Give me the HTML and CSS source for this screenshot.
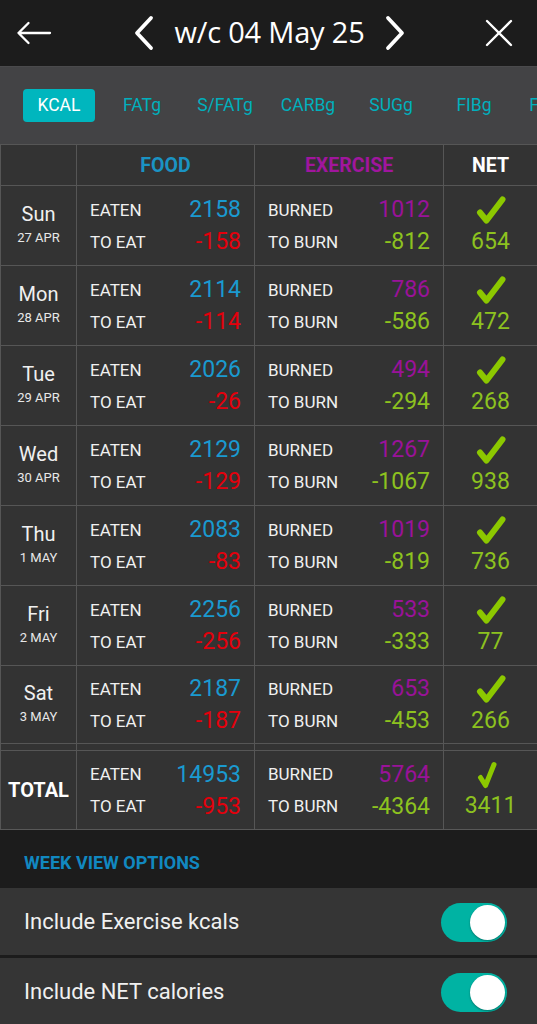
FILE: index.html
```html
<!DOCTYPE html>
<html>
<head>
<meta charset="utf-8">
<link rel="stylesheet" href="styles.css">
</head>
<body>
<div class="app">
  <header class="topbar">
    <svg class="ico-back" width="36" height="26" viewBox="0 0 36 26"><path d="M34 13 H2.5 M12.5 3 L2.5 13 L12.5 23" fill="none" stroke="#fff" stroke-width="2.3" stroke-linecap="round" stroke-linejoin="round"/></svg>
    <div class="week">
      <svg class="chev" width="22" height="36" viewBox="0 0 22 36"><path d="M18 3 L4 18 L18 33" fill="none" stroke="#fff" stroke-width="3.8" stroke-linecap="round" stroke-linejoin="round"/></svg>
      <span class="title">w/c 04 May 25</span>
      <svg class="chev" width="22" height="36" viewBox="0 0 22 36"><path d="M4 3 L18 18 L4 33" fill="none" stroke="#fff" stroke-width="3.8" stroke-linecap="round" stroke-linejoin="round"/></svg>
    </div>
    <svg class="ico-close" width="28" height="28" viewBox="0 0 28 28"><path d="M2 2 L26 26 M26 2 L2 26" fill="none" stroke="#fff" stroke-width="2.3" stroke-linecap="round"/></svg>
  </header>

  <nav class="tabs">
    <span class="tab active">KCAL</span>
    <span class="tab">FATg</span>
    <span class="tab">S/FATg</span>
    <span class="tab">CARBg</span>
    <span class="tab">SUGg</span>
    <span class="tab">FIBg</span>
    <span class="tab">FRUITg</span>
  </nav>

  <div class="grid">
    <div class="cell head"></div>
    <div class="cell head food">FOOD</div>
    <div class="cell head exer">EXERCISE</div>
    <div class="cell head netc">NET</div>

    <div class="cell day"><span class="dname">Sun</span><span class="ddate">27 APR</span></div>
    <div class="cell pair"><div class="line"><span class="lbl">EATEN</span><span class="num blue">2158</span></div><div class="line"><span class="lbl">TO EAT</span><span class="num red">-158</span></div></div>
    <div class="cell pair"><div class="line"><span class="lbl">BURNED</span><span class="num purple">1012</span></div><div class="line"><span class="lbl">TO BURN</span><span class="num green">-812</span></div></div>
    <div class="cell net"><svg class="check" width="32" height="32" viewBox="0 0 32 32"><path d="M5 17.5 L11.5 25.5 L27.5 4.5" fill="none" stroke="#8cc800" stroke-width="6" stroke-linecap="round" stroke-linejoin="round"/></svg><span class="num green">654</span></div>

    <div class="cell day"><span class="dname">Mon</span><span class="ddate">28 APR</span></div>
    <div class="cell pair"><div class="line"><span class="lbl">EATEN</span><span class="num blue">2114</span></div><div class="line"><span class="lbl">TO EAT</span><span class="num red">-114</span></div></div>
    <div class="cell pair"><div class="line"><span class="lbl">BURNED</span><span class="num purple">786</span></div><div class="line"><span class="lbl">TO BURN</span><span class="num green">-586</span></div></div>
    <div class="cell net"><svg class="check" width="32" height="32" viewBox="0 0 32 32"><path d="M5 17.5 L11.5 25.5 L27.5 4.5" fill="none" stroke="#8cc800" stroke-width="6" stroke-linecap="round" stroke-linejoin="round"/></svg><span class="num green">472</span></div>

    <div class="cell day"><span class="dname">Tue</span><span class="ddate">29 APR</span></div>
    <div class="cell pair"><div class="line"><span class="lbl">EATEN</span><span class="num blue">2026</span></div><div class="line"><span class="lbl">TO EAT</span><span class="num red">-26</span></div></div>
    <div class="cell pair"><div class="line"><span class="lbl">BURNED</span><span class="num purple">494</span></div><div class="line"><span class="lbl">TO BURN</span><span class="num green">-294</span></div></div>
    <div class="cell net"><svg class="check" width="32" height="32" viewBox="0 0 32 32"><path d="M5 17.5 L11.5 25.5 L27.5 4.5" fill="none" stroke="#8cc800" stroke-width="6" stroke-linecap="round" stroke-linejoin="round"/></svg><span class="num green">268</span></div>

    <div class="cell day"><span class="dname">Wed</span><span class="ddate">30 APR</span></div>
    <div class="cell pair"><div class="line"><span class="lbl">EATEN</span><span class="num blue">2129</span></div><div class="line"><span class="lbl">TO EAT</span><span class="num red">-129</span></div></div>
    <div class="cell pair"><div class="line"><span class="lbl">BURNED</span><span class="num purple">1267</span></div><div class="line"><span class="lbl">TO BURN</span><span class="num green">-1067</span></div></div>
    <div class="cell net"><svg class="check" width="32" height="32" viewBox="0 0 32 32"><path d="M5 17.5 L11.5 25.5 L27.5 4.5" fill="none" stroke="#8cc800" stroke-width="6" stroke-linecap="round" stroke-linejoin="round"/></svg><span class="num green">938</span></div>

    <div class="cell day"><span class="dname">Thu</span><span class="ddate">1 MAY</span></div>
    <div class="cell pair"><div class="line"><span class="lbl">EATEN</span><span class="num blue">2083</span></div><div class="line"><span class="lbl">TO EAT</span><span class="num red">-83</span></div></div>
    <div class="cell pair"><div class="line"><span class="lbl">BURNED</span><span class="num purple">1019</span></div><div class="line"><span class="lbl">TO BURN</span><span class="num green">-819</span></div></div>
    <div class="cell net"><svg class="check" width="32" height="32" viewBox="0 0 32 32"><path d="M5 17.5 L11.5 25.5 L27.5 4.5" fill="none" stroke="#8cc800" stroke-width="6" stroke-linecap="round" stroke-linejoin="round"/></svg><span class="num green">736</span></div>

    <div class="cell day"><span class="dname">Fri</span><span class="ddate">2 MAY</span></div>
    <div class="cell pair"><div class="line"><span class="lbl">EATEN</span><span class="num blue">2256</span></div><div class="line"><span class="lbl">TO EAT</span><span class="num red">-256</span></div></div>
    <div class="cell pair"><div class="line"><span class="lbl">BURNED</span><span class="num purple">533</span></div><div class="line"><span class="lbl">TO BURN</span><span class="num green">-333</span></div></div>
    <div class="cell net"><svg class="check" width="32" height="32" viewBox="0 0 32 32"><path d="M5 17.5 L11.5 25.5 L27.5 4.5" fill="none" stroke="#8cc800" stroke-width="6" stroke-linecap="round" stroke-linejoin="round"/></svg><span class="num green">77</span></div>

    <div class="cell day last"><span class="dname">Sat</span><span class="ddate">3 MAY</span></div>
    <div class="cell pair last"><div class="line"><span class="lbl">EATEN</span><span class="num blue">2187</span></div><div class="line"><span class="lbl">TO EAT</span><span class="num red">-187</span></div></div>
    <div class="cell pair last"><div class="line"><span class="lbl">BURNED</span><span class="num purple">653</span></div><div class="line"><span class="lbl">TO BURN</span><span class="num green">-453</span></div></div>
    <div class="cell net last"><svg class="check" width="32" height="32" viewBox="0 0 32 32"><path d="M5 17.5 L11.5 25.5 L27.5 4.5" fill="none" stroke="#8cc800" stroke-width="6" stroke-linecap="round" stroke-linejoin="round"/></svg><span class="num green">266</span></div>

    <div class="cell gap"></div>
    <div class="cell gap"></div>
    <div class="cell gap"></div>
    <div class="cell gap"></div>

    <div class="cell day total"><span class="tname">TOTAL</span></div>
    <div class="cell pair total"><div class="line"><span class="lbl">EATEN</span><span class="num blue">14953</span></div><div class="line"><span class="lbl">TO EAT</span><span class="num red">-953</span></div></div>
    <div class="cell pair total"><div class="line"><span class="lbl">BURNED</span><span class="num purple">5764</span></div><div class="line"><span class="lbl">TO BURN</span><span class="num green">-4364</span></div></div>
    <div class="cell net total"><svg class="check-sm" width="20" height="28" viewBox="0 0 20 28"><path d="M3.5 16.5 L8.5 24.5 L17 3.5" fill="none" stroke="#8cc800" stroke-width="5" stroke-linecap="round" stroke-linejoin="round"/></svg><span class="num green">3411</span></div>
  </div>

  <section class="options">
    <div class="opt-head">WEEK VIEW OPTIONS</div>
    <div class="opt-row"><span class="opt-label">Include Exercise kcals</span><span class="toggle"><span class="knob"></span></span></div>
    <div class="opt-row"><span class="opt-label">Include NET calories</span><span class="toggle"><span class="knob"></span></span></div>
  </section>
</div>
</body>
</html>
```

FILE: styles.css
```css
* { box-sizing: border-box; }
html, body { margin: 0; padding: 0; background: #1c1c1c; }
body { width: 537px; height: 1024px; overflow: hidden; font-family: Roboto, "Liberation Sans", sans-serif; color: #f0f0f0; }
.app { width: 537px; }

.topbar {
  height: 66px;
  background: #1c1c1c;
  display: flex;
  align-items: center;
  padding: 0 24px 0 16px;
}
.ico-back { display: block; margin-top: -1px; }
.week { flex: 1; display: flex; align-items: center; justify-content: center; gap: 19px; padding-left: 2px; margin-top: -2px; }
.chev { display: block; margin-top: 1px; }
.title { font-family: "Open Sans", "DejaVu Sans", sans-serif; font-size: 29px; color: #fff; letter-spacing: -0.2px; line-height: 36px; }
.ico-close { display: block; margin-top: -1px; }

.tabs {
  height: 78px;
  background: #434345;
  border-top: 1px solid #4a4a4c;
  display: flex;
  align-items: center;
  gap: 11px;
  padding-left: 23px;
  overflow: hidden;
  white-space: nowrap;
}
.tab {
  flex: 0 0 72px;
  height: 33px;
  line-height: 33px;
  text-align: center;
  font-size: 17.5px;
  color: #00b0bd;
  border-radius: 4px;
}
.tab.active { background: #00b6be; color: #fff; }

.grid {
  display: grid;
  grid-template-columns: 76px 178px 189px 94px;
  background: #333333;
  border-bottom: 1px solid #585858;
}
.cell { border-left: 1px solid #565656; border-top: 1px solid #565656; }
.head { height: 41px; display: flex; align-items: center; justify-content: center; font-weight: 700; font-size: 19.5px; }
.food { color: #1a93c4; }
.exer { color: #a0169d; }
.netc { color: #fff; }

.day, .pair, .net { height: 80px; }
.last { height: 78px; }
.gap { height: 7px; }
.total { height: 79px; }

.day { display: flex; flex-direction: column; align-items: center; justify-content: center; padding-bottom: 4px; }
.dname { font-size: 20px; line-height: 24px; color: #f0f0f0; margin-bottom: 4px; }
.ddate { font-size: 13px; line-height: 16px; color: #e8e8e8; }
.total.day { padding-bottom: 0; }
.tname { font-size: 20px; font-weight: 700; color: #fff; }

.pair { display: flex; flex-direction: column; justify-content: center; padding: 0 13px 0 13px; }
.line { display: flex; justify-content: space-between; align-items: center; height: 32px; }
.lbl { font-size: 17px; color: #f0f0f0; }
.num { font-size: 23px; }
.blue { color: #1a9ad0; }
.red { color: #e4000c; }
.purple { color: #9a1299; }
.green { color: #8dc21f; }

.net { display: flex; flex-direction: column; align-items: center; justify-content: center; }
.net .num { line-height: 26px; margin-top: 2px; }
.check { display: block; margin-top: -2px; }
.check-sm { display: block; margin-left: -8px; margin-bottom: 2px; }

.options { background: #1c1c1c; }
.opt-head { height: 58px; padding: 24px 0 0 24px; font-size: 18px; font-weight: 700; color: #1188c0; line-height: 18px; }
.opt-row {
  height: 67px;
  background: #353535;
  display: flex;
  align-items: center;
  justify-content: space-between;
  padding: 0 30px 0 24px;
  margin-bottom: 3px;
}
.opt-label { font-size: 22px; color: #f0f0f0; }
.toggle {
  width: 66px;
  height: 39px;
  border-radius: 20px;
  background: #00b3a3;
  display: flex;
  align-items: center;
  justify-content: flex-end;
  padding-right: 2px;
  margin-top: 2px;
}
.knob { width: 35px; height: 35px; border-radius: 50%; background: #fff; box-shadow: 0 1px 2px rgba(0,0,0,0.35); }
```
